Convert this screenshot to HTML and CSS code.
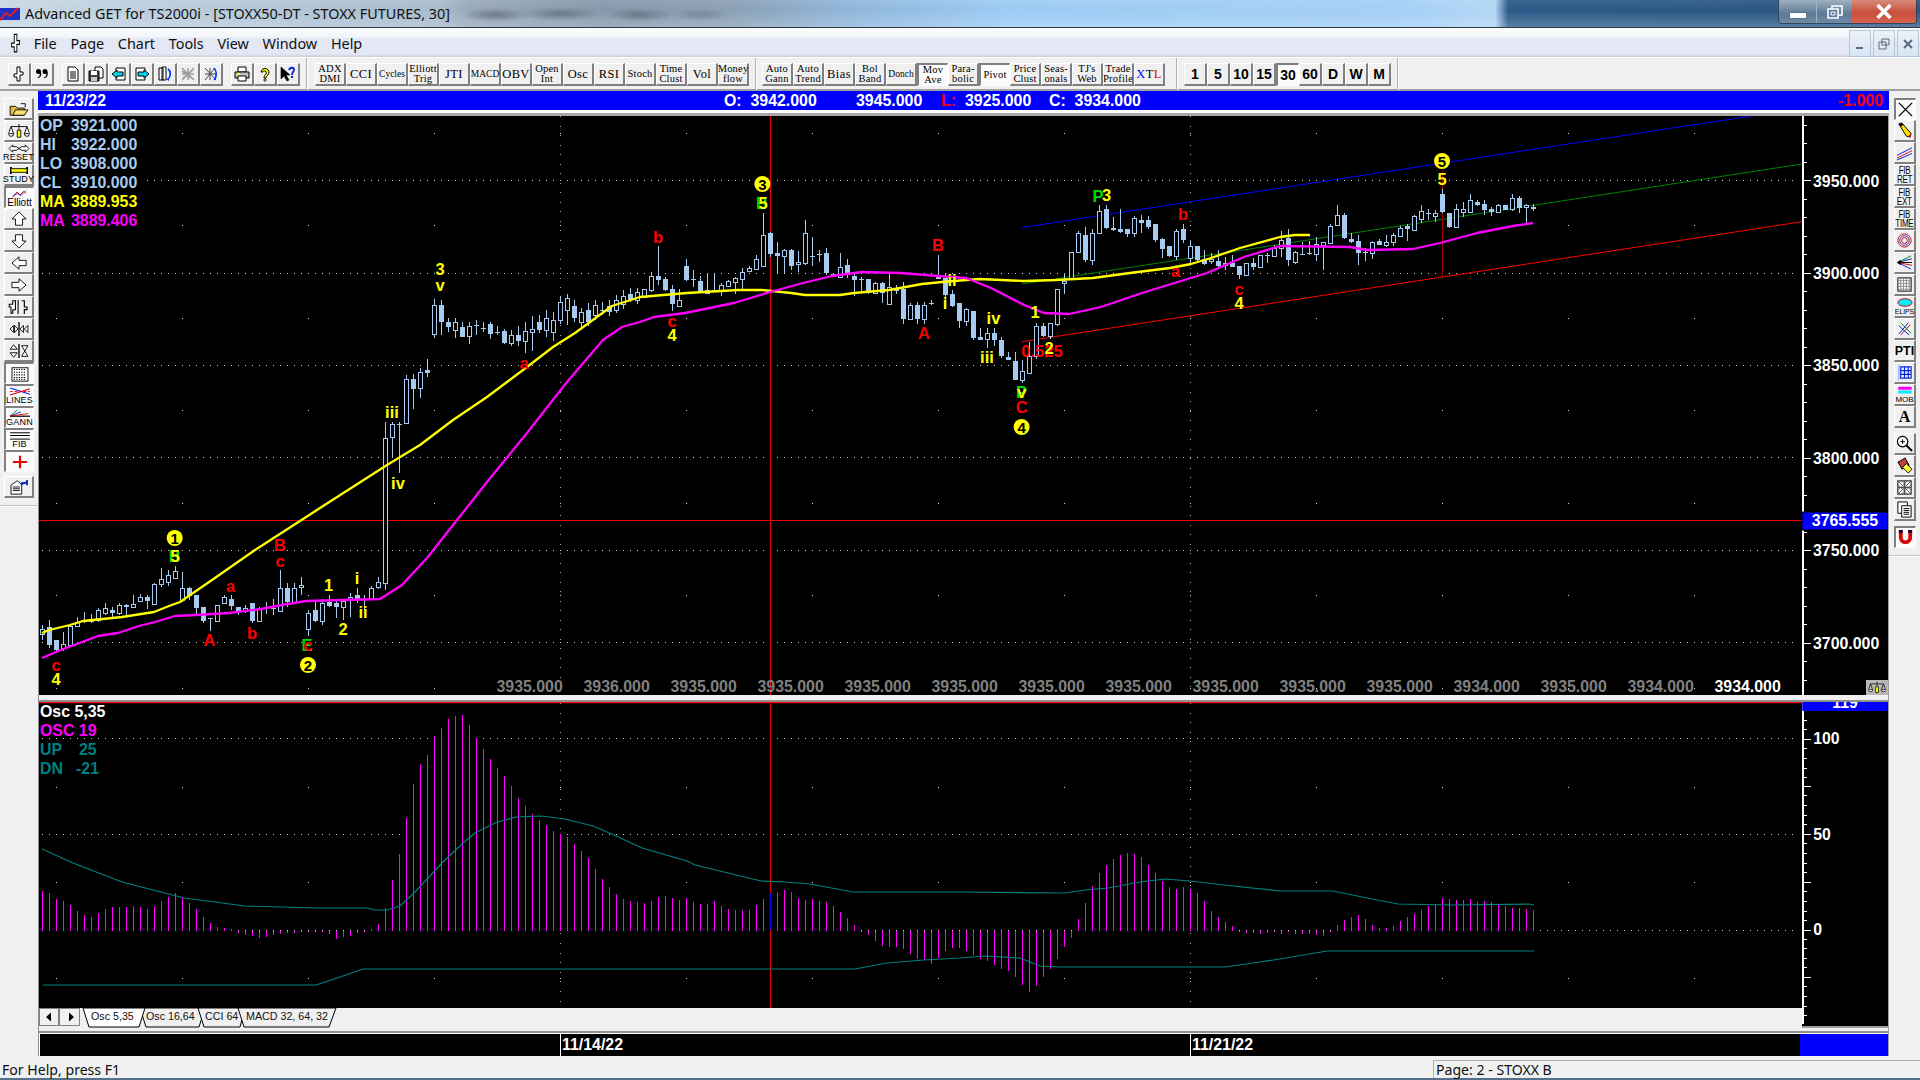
FILE: index.html
```html
<!DOCTYPE html>
<html lang="en">
<head>
<meta charset="utf-8">
<title>Advanced GET for TS2000i</title>
<link rel="stylesheet" href="styles.css">
</head>
<body>
<svg class="defs" width="0" height="0">
  <defs>
    <symbol id="i-dagger" viewBox="0 0 16 16" preserveAspectRatio="none"><path d="M6 1h3v5h3v3H9v6H6v-4H3V8h3z" fill="#fff" stroke="#000"/></symbol>
    <symbol id="i-scale" viewBox="0 0 24 18"><path d="M12 1v15M3 4h18M3 4l-3 8M3 4l3 8M21 4l-3 8M21 4l3 8" stroke="#000" fill="none"/><path d="M0 12h6a3 3 0 0 1-6 0zM18 12h6a3 3 0 0 1-6 0z" fill="#fff" stroke="#000"/><path d="M10 8h4v8h-4z" fill="#ff0" stroke="#000"/></symbol>
  </defs>
</svg>

<header class="titlebar">
  <svg class="appicon" viewBox="0 0 20 16"><path d="M0 2h20v12H0z" fill="#2030c0"/><path d="M0 14l6-7 4 3 8-8" stroke="#e02020" stroke-width="2" fill="none"/></svg>
  <span class="titletext">Advanced GET for TS2000i - [STOXX50-DT - STOXX FUTURES, 30]</span>
  <div class="wincontrols">
    <div class="wc wc-min"><i></i></div>
    <div class="wc wc-max"><svg viewBox="0 0 16 14" width="16" height="14"><path d="M5 1h10v9H5z" fill="none" stroke="#fff" stroke-width="1.6"/><path d="M1 4h10v9H1z" fill="#5d7f9f" stroke="#fff" stroke-width="1.6"/><path d="M4 7h4v3H4z" fill="none" stroke="#fff"/></svg></div>
    <div class="wc wc-close"><svg viewBox="0 0 18 14" width="20" height="15"><path d="M3 1l12 12M15 1L3 13" stroke="#fff" stroke-width="3.4"/></svg></div>
  </div>
</header>

<nav class="menubar">
  <svg class="menuicon" viewBox="0 0 14 20"><use href="#i-dagger" width="14" height="20"/></svg>
  <span>File</span><span>Page</span><span>Chart</span><span>Tools</span><span>View</span><span>Window</span><span>Help</span>
  <div class="mdicontrols">
    <div class="mdi"><svg width="12" height="12" viewBox="0 0 12 12"><path d="M2 9h7v2H2z" fill="#5b6b80"/></svg></div>
    <div class="mdi"><svg width="12" height="12" viewBox="0 0 12 12"><path d="M4 1h7v6H4zM1 4h7v7H1z" fill="#dfe7f2" stroke="#5b6b80"/></svg></div>
    <div class="mdi"><svg width="12" height="12" viewBox="0 0 12 12"><path d="M2 2l8 8M10 2l-8 8" stroke="#5b6b80" stroke-width="2"/></svg></div>
  </div>
</nav>

<div class="toolbar">
  <div class="tgroup">
    <button class="btn b23"><svg class="ic" viewBox="0 0 16 16"><use href="#i-dagger" width="16" height="16"/></svg></button>
    <button class="btn b23"><svg class="ic" viewBox="0 0 16 16"><circle cx="4.5" cy="5.5" r="2.5"/><circle cx="11" cy="5.5" r="2.5"/><path d="M5 6c2 3 0 5-2 6 3 0 5-2 4-6zM11.500 6c2 3 0 5-2 6 3 0 5-2 4-6z"/></svg></button>
  </div>
  <div class="tgroup g2">
    <button class="btn b23"><svg class="ic" viewBox="0 0 16 16"><path d="M3 1h7l3 3v11H3z" fill="#fff" stroke="#000"/><path d="M5 6h6M5 8h6M5 10h6M5 12h6" stroke="#000"/></svg></button>
    <button class="btn b23"><svg class="ic" viewBox="0 0 16 16"><path d="M7 1h6l2 2v9H7z" fill="#fff" stroke="#000"/><path d="M1 5h10v10H1z" fill="#404040" stroke="#000"/><path d="M3 5h6v4H3z" fill="#fff"/><path d="M3 11h6v4H3z" fill="#c8c8c8"/></svg></button>
    <button class="btn b23"><svg class="ic" viewBox="0 0 16 16"><path d="M5 2h9v12H5z" fill="#fff" stroke="#000"/><path d="M1 8l5-4v2h6v4H6v2z" fill="#00d8f0" stroke="#000"/></svg></button>
    <button class="btn b23"><svg class="ic" viewBox="0 0 16 16"><path d="M2 2h9v12H2z" fill="#fff" stroke="#000"/><path d="M15 8l-5-4v2H4v4h6v2z" fill="#00d8f0" stroke="#000"/></svg></button>
    <button class="btn b23"><svg class="ic" viewBox="0 0 16 16"><path d="M2 2h4v12H2zM5 1h4v13H5z" fill="#fff" stroke="#000"/><path d="M11 3c3 2 3 8 0 10" stroke="#0030ff" stroke-width="1.600" fill="none"/><path d="M9 13l3 2v-3z" fill="#0030ff"/></svg></button>
    <button class="btn b23"><svg class="ic" viewBox="0 0 16 16"><path d="M2 2l12 12M14 2L2 14M2 8h12M8 2v12M2 5l11 8M13 4L3 12" stroke="#a0a0a0" stroke-width="1.600"/></svg></button>
    <button class="btn b23"><svg class="ic" viewBox="0 0 16 16"><path d="M2 2l11 12M12 2L2 14M2 8h11M7 2v12" stroke="#404040"/><path d="M11 2c3 3 3 9 0 12" stroke="#0030ff" stroke-width="1.600" fill="none"/></svg></button>
  </div>
  <div class="tgroup g3">
    <button class="btn b23"><svg class="ic" viewBox="0 0 16 16"><path d="M4 1h8v5H4z" fill="#fff" stroke="#000"/><path d="M1 6h14v6H1z" fill="#c0c0c0" stroke="#000"/><path d="M4 10h8v5H4z" fill="#fff" stroke="#000"/><path d="M3 8h3" stroke="#ff0" stroke-width="2"/></svg></button>
    <button class="btn b23"><svg class="ic" viewBox="0 0 16 16"><path d="M4 6a4 4 0 1 1 7 3c-1 1-2 2-2 3H7c0-2 1-3 2-4 1-1 0-3-1-3S6 5 6 6z" fill="#ff0" stroke="#000"/><path d="M7 13h2v2H7z" fill="#ff0" stroke="#000" stroke-width=".7"/></svg></button>
    <button class="btn b23"><svg class="ic" viewBox="0 0 16 16"><path d="M1 1v12l3-3 3 5 2-1-3-5h4z" stroke="#000" stroke-width=".6"/><path d="M9 4c1-3 5-3 5 0 0 2-2 2-2 5" fill="none" stroke="#0020e0" stroke-width="1.800"/><path d="M11 10h2v2h-2z" fill="#0020e0"/></svg></button>
  </div>
  <div class="tsep"></div>
  <div class="tgroup g4">
    <button class="btn b31 st">ADX<br>DMI</button><button class="btn b31 st1">CCI</button><button class="btn b31 st sm">Cycles</button><button class="btn b31 st">Elliott<br>Trig</button><button class="btn b31 st1">JTI</button><button class="btn b31 st sm">MACD</button><button class="btn b31 st1">OBV</button><button class="btn b31 st">Open<br>Int</button><button class="btn b31 st1">Osc</button><button class="btn b31 st1">RSI</button><button class="btn b31 st">Stoch</button><button class="btn b31 st">Time<br>Clust</button><button class="btn b31 st1">Vol</button><button class="btn b31 st">Money<br>flow</button>
  </div>
  <div class="tsep s2"></div>
  <div class="tgroup g5">
    <button class="btn b31 st">Auto<br>Gann</button><button class="btn b31 st">Auto<br>Trend</button><button class="btn b31 st1">Bias</button><button class="btn b31 st">Bol<br>Band</button><button class="btn b31 st sm">Donch</button><button class="btn b31 st on">Mov<br>Ave</button><button class="btn b31 st">Para-<br>bolic</button><button class="btn b31 st on">Pivot</button><button class="btn b31 st">Price<br>Clust</button><button class="btn b31 st">Seas-<br>onals</button><button class="btn b31 st">TJ's<br>Web</button><button class="btn b31 st">Trade<br>Profile</button><button class="btn b31 st1"><b class="c-blue">X</b>T<b class="c-red">L</b></button>
  </div>
  <div class="tsep s3"></div>
  <div class="tgroup g6">
    <button class="btn b23 per">1</button><button class="btn b23 per">5</button><button class="btn b23 per">10</button><button class="btn b23 per">15</button><button class="btn b23 per on">30</button><button class="btn b23 per">60</button><button class="btn b23 per">D</button><button class="btn b23 per">W</button><button class="btn b23 per">M</button>
  </div>
  <div class="tsep s4"></div>
</div>

<div class="workspace">
  <aside class="tools left">
    <button class="tb"><svg viewBox="0 0 24 18"><path d="M2 6h6l2 2h8v8H2z" fill="#e0c040" stroke="#000"/><path d="M5 16l3-6h14l-4 6z" fill="#ffe070" stroke="#000"/><path d="M14 3h5v4" stroke="#000" fill="none"/></svg></button>
    <button class="tb"><svg viewBox="0 0 24 18"><use href="#i-scale"/></svg></button>
    <button class="tb lab"><svg viewBox="0 0 24 10"><path d="M1 5l4-4v2h4l3 2-3 2H5v2zM23 5l-4-4v2h-4l-3 2 3 2h4v2z" fill="#fff" stroke="#000"/></svg><span>RESET</span></button>
    <button class="tb lab"><svg viewBox="0 0 24 10"><path d="M3 1v8M21 1v8" stroke="#000" stroke-width="2"/><path d="M3 3h18v4H3z" fill="#ff0" stroke="#000"/></svg><span>STUDY</span></button>
    <button class="tb lab on"><svg viewBox="0 0 24 12"><path d="M2 11l6-7 4 4 5-5 3 3" stroke="#e00000" stroke-width="1.300" fill="none"/><path d="M3 9l6-3 4 3 7-7" stroke="#0020d0" fill="none"/></svg><span class="low">Elliott</span></button>
    <button class="tb"><svg viewBox="0 0 24 18"><path d="M12 1l8 8h-4v7H8V9H4z" fill="#fff" stroke="#000"/></svg></button>
    <button class="tb"><svg viewBox="0 0 24 18"><path d="M12 17l8-8h-4V2H8v7H4z" fill="#fff" stroke="#000"/></svg></button>
    <button class="tb"><svg viewBox="0 0 24 18"><path d="M4 9l8-7v4h8v6h-8v4z" fill="#fff" stroke="#000"/></svg></button>
    <button class="tb"><svg viewBox="0 0 24 18"><path d="M20 9l-8-7v4H4v6h8v4z" fill="#fff" stroke="#000"/></svg></button>
    <button class="tb"><svg viewBox="0 0 24 18"><path d="M1 6h4V2h3v10H5v4H3V9H1zM11 1v16" fill="#fff" stroke="#000" stroke-width="1.200"/><path d="M15 2h3v7h3v3h-3v5" fill="none" stroke="#000" stroke-width="1.300"/></svg></button>
    <button class="tb"><svg viewBox="0 0 24 18"><path d="M2 9l4-4v8zM7 5l4 4-4 4zM13 9l4-4v8zM22 5l-4 4 4 4z" fill="#fff" stroke="#000"/><path d="M12 1v16" stroke="#000" stroke-width="1.500"/></svg></button>
    <button class="tb"><svg viewBox="0 0 24 18"><path d="M6 2l4 5H2zM6 16l4-5H2z" fill="#fff" stroke="#000"/><path d="M12 1v16" stroke="#000" stroke-width="1.500"/><path d="M15 3h7l-3.500 6 3.500 6h-7l3.500-6z" fill="#fff" stroke="#000"/></svg></button>
    <button class="tb on"><svg viewBox="0 0 24 18"><rect x="3" y="2" width="18" height="15" fill="#fff" stroke="#000"/><path d="M5 4h14M5 7h14M5 10h14M5 13h14M5 15h14" stroke="#000" stroke-width="1.200" stroke-dasharray="1.400 1.400"/></svg></button>
    <button class="tb lab on"><svg viewBox="0 0 24 10"><path d="M1 1l22 7" stroke="#0020e0" stroke-width="1.200"/><path d="M1 9L23 2" stroke="#e00000" stroke-width="1.200"/><path d="M1 5h22" stroke="#e00000" stroke-dasharray="3 2"/></svg><span>LINES</span></button>
    <button class="tb lab on"><svg viewBox="0 0 24 10"><path d="M1 8L9 1" stroke="#008000"/><path d="M1 8l12-5" stroke="#0020e0"/><path d="M1 8h22" stroke="#000" stroke-width="1.400"/><path d="M1 8l20-3" stroke="#e00000"/></svg><span>GANN</span></button>
    <button class="tb lab on"><svg viewBox="0 0 24 10"><path d="M1 2h22M1 5h22M1 9h22" stroke="#000" stroke-width="1.100"/></svg><span>FIB</span></button>
    <button class="tb on"><svg viewBox="0 0 24 18"><path d="M12 2v14M4 9h16" stroke="#f00000" stroke-width="2.400"/></svg></button>
    <button class="tb gap"><svg viewBox="0 0 24 18"><path d="M3 7l7-5 5 4v11H3z" fill="#fff" stroke="#000"/><path d="M5 9h8M5 11h8M5 13h8" stroke="#000"/><path d="M14 4l6-1V1h2v6h-2V5l-6 2z" fill="#0020b0"/></svg></button>
    <div class="toolend"></div>
  </aside>

  <main class="main">
    <div class="infobar">
      <span class="d">11/23/22</span><span>O:&nbsp; 3942.000</span><span>3945.000</span><span class="c-lred">L:</span><span>3925.000</span><span>C:&nbsp; 3934.000</span><span class="chg">-1.000</span>
    </div>
    <div class="infoline"></div>

    <svg class="pane" viewBox="39 116 1849 579" width="1849" height="579">
      <g class="dots">
        <path d="M147 180.500H1794"/>
        <path d="M42 273H1794M42 365H1794M42 457.500H1794M42 550H1794M42 642.500H1794"/>
        <path class="v" d="M560.500 116V695M1190.500 116V695"/>
      </g>
      <g id="sparse-top" class="sparse"></g>
      <path class="hline" d="M39 520.500H1802"/>
      <path class="tl-blue" d="M1022 227.500L1751 116"/>
      <path class="tl-green" d="M1022 284L1802 164"/>
      <path class="tl-red" d="M1022 341.700L1802 221.700"/>
      <path class="dline" d="M1442.500 170V277"/>
      <path class="cursor" d="M770.500 116V695"/>
      <g id="candles"></g>
      <polyline class="ma-y" points="42,633 49,630 70,625 83,621 122,617 154,612 169,606 180,602 196,591 212,580 255,550 300,521 320,508 387,465 420,445 453,420 487,397 527,367 553,347 575,333 612,306 640,297 687,293 738,290 762,290 791,293 805,295 840,295 854,293 889,290 922,284 942,282 979,279 1024,281 1056,280 1093,278 1130,273 1170,268 1191,264 1211,258 1240,248 1280,237 1295,235 1310,235"/>
      <polyline class="ma-m" points="42,658 61,650 82,642 98,636 118,633 139,626 155,622 175,616 196,615 229,613 261,609 282,605 306,601 380,599 402,585 427,558 457,520 465,510 487,482 527,433 567,382 603,340 622,327 640,322 654,317 685,313 734,303 770,292 803,283 832,276 862,272 901,273 938,276 966,278 991,288 1024,305 1044,313 1069,314 1101,307 1142,293 1207,273 1244,257 1280,246 1350,247 1367,250 1413,249 1440,243 1477,233 1513,226 1533,223"/>

      <g class="lb">
        <circle class="ball" cx="174.700" cy="538" r="8"/><text class="k" x="174.700" y="538">1</text>
        <text class="g" x="174.700" y="556">B</text><text class="y" x="175" y="556">5</text>
        <text class="r" x="56" y="665">c</text><text class="y" x="56" y="679">4</text>
        <text class="r" x="209.400" y="640">A</text><text class="r" x="252" y="633">b</text><text class="r" x="230.600" y="586">a</text>
        <text class="r" x="280" y="545">B</text><text class="r" x="280" y="561">c</text>
        <text class="g" x="307" y="645">E</text><text class="r" x="308" y="645">c</text>
        <circle class="ball" cx="308" cy="665" r="8"/><text class="k" x="308" y="665">2</text>
        <text class="y" x="328.600" y="585">1</text><text class="y" x="343" y="629">2</text><text class="y" x="357" y="578">i</text><text class="y" x="363" y="612">ii</text>
        <text class="y" x="392" y="412">iii</text><text class="y" x="398" y="483">iv</text><text class="r" x="524" y="363">a</text>
        <text class="y" x="440" y="269">3</text><text class="y" x="440" y="285">v</text>
        <circle class="ball" cx="762.400" cy="184" r="8"/><text class="k" x="762.400" y="184">3</text>
        <text class="g" x="762" y="203">B</text><text class="y" x="763" y="203">5</text>
        <text class="r" x="658" y="237">b</text><text class="r" x="672" y="321">c</text><text class="y" x="672" y="335">4</text>
        <text class="r" x="938" y="245">B</text><text class="y" x="952" y="280">ii</text><text class="y" x="945" y="303">i</text><text class="r" x="924" y="333">A</text>
        <text class="y" x="993.500" y="318">iv</text><text class="y" x="987" y="357">iii</text><text class="y" x="1035" y="312">1</text>
        <text class="r" x="1042" y="351">0.525</text><text class="y" x="1049" y="348">2</text>
        <text class="g" x="1021.600" y="392">P</text><text class="y" x="1021.600" y="392">v</text><text class="r" x="1021.600" y="407">C</text>
        <circle class="ball" cx="1021.600" cy="427" r="8"/><text class="k" x="1021.600" y="427">4</text>
        <text class="g" x="1098" y="196">P</text><text class="y" x="1106.500" y="195">3</text>
        <text class="r" x="1183" y="214">b</text><text class="r" x="1175.500" y="271">a</text><text class="r" x="1239" y="289">c</text><text class="y" x="1239" y="303">4</text>
        <circle class="ball" cx="1442" cy="161" r="8"/><text class="k" x="1442" y="161">5</text>
        <text class="y" x="1442" y="179">5</text>
      </g>

      <g class="legend">
        <text class="lb-blue" x="40" y="125">OP</text><text class="lb-blue" x="71" y="125">3921.000</text>
        <text class="lb-blue" x="40" y="144">HI</text><text class="lb-blue" x="71" y="144">3922.000</text>
        <text class="lb-blue" x="40" y="163">LO</text><text class="lb-blue" x="71" y="163">3908.000</text>
        <text class="lb-blue" x="40" y="182">CL</text><text class="lb-blue" x="71" y="182">3910.000</text>
        <text class="lb-yel" x="40" y="201">MA</text><text class="lb-yel" x="71" y="201">3889.953</text>
        <text class="lb-mag" x="40" y="220">MA</text><text class="lb-mag" x="71" y="220">3889.406</text>
      </g>

      <g class="legend vals">
        <text x="496.500" y="686">3935.000</text><text x="583.500" y="686">3936.000</text><text x="670.500" y="686">3935.000</text><text x="757.500" y="686">3935.000</text><text x="844.500" y="686">3935.000</text><text x="931.500" y="686">3935.000</text><text x="1018.500" y="686">3935.000</text><text x="1105.500" y="686">3935.000</text><text x="1192.500" y="686">3935.000</text><text x="1279.500" y="686">3935.000</text><text x="1366.500" y="686">3935.000</text><text x="1453.500" y="686">3934.000</text><text x="1540.500" y="686">3935.000</text><text x="1627.500" y="686">3934.000</text>
        <text class="w" x="1714.500" y="686">3934.000</text>
      </g>

      <path class="axis" d="M1802.500 116V695"/>
      <g id="ticks-top" class="ticks"></g>
      <g class="legend axl">
        <text x="1813" y="181">3950.000</text><text x="1813" y="273">3900.000</text><text x="1813" y="365">3850.000</text><text x="1813" y="458">3800.000</text><text x="1813" y="550">3750.000</text><text x="1813" y="643">3700.000</text>
      </g>
      <rect class="pricebox" x="1802" y="512" width="86" height="18"/>
      <text class="pricetext" x="1845" y="520.500">3765.555</text>
      <g class="scalebtn">
        <rect x="1866" y="680" width="22" height="15"/>
        <svg x="1868" y="681" width="18" height="13" viewBox="0 0 24 18"><use href="#i-scale"/></svg>
      </g>
    </svg>

    <div class="panesep"></div>

    <div class="lower">
      <div class="lowerleft">
        <svg class="pane" viewBox="39 702 1763 306" width="1763" height="306">
          <path class="redtop" d="M39 702.500H1802"/>
          <g class="dots">
            <path d="M42 738.500H1794M42 834.500H1794M42 930.500H1794"/>
            <path class="v v2" d="M560.500 703V1008M1190.500 703V1008"/>
          </g>
          <g id="sparse-low" class="sparse"></g>
          <g id="hist"></g>
          <path class="cursor" d="M770.500 703V1008"/>
          <path class="curbar" d="M770.500 893V930"/>
          <polyline class="teal" points="42,849 73,863 122,882 184,898 245,906 320,908 367,908 375,910 387,910 400,906 414,893 442,863 463,843 475,833 495,823 516,817 542,816 565,819 593,826 614,835 642,848 687,861 695,865 728,873 761,881 785,882 810,884 853,892 960,892 1065,893 1085,890 1108,888 1140,882 1165,879 1190,881 1224,885 1280,891 1333,891 1362,897 1398,904 1451,905 1529,904 1534,905"/>
          <polyline class="teal" points="43,985 316,985 340,977 363,969 855,969 887,963 924,960 960,958 985,956 1020,958 1040,966 1060,967 1225,967 1260,962 1280,959 1327,951 1534,951"/>
          <g class="legend">
            <text class="w" x="40" y="711">Osc 5,35</text>
            <text class="lb-mag" x="40" y="730">OSC 19</text>
            <text class="lb-teal" x="40" y="749">UP</text><text class="lb-teal" x="79" y="749">25</text>
            <text class="lb-teal" x="40" y="768">DN</text><text class="lb-teal" x="76" y="768">-21</text>
          </g>
        </svg>
        <svg class="tabs" viewBox="39 1008 1763 20" width="1763" height="20">
          <rect class="scbtn" x="39.500" y="1008.500" width="19" height="17"/>
          <rect class="scbtn" x="59.500" y="1008.500" width="20" height="17"/>
          <path class="scarrow" d="M51 1012.500v9l-5-4.500zM69 1012.500v9l5-4.500z"/>
          <polygon class="tab" points="140,1008 146,1027 199,1027 205,1008"/>
          <polygon class="tab" points="198,1008 204,1027 240,1027 245,1008"/>
          <polygon class="tab" points="238,1008 244,1027 329,1027 336,1008"/>
          <polygon class="tab active" points="83,1008 89,1027 139,1027 145,1008"/>
          <text class="tabt" x="91" y="1016">Osc 5,35</text>
          <text class="tabt" x="146" y="1016">Osc 16,64</text>
          <text class="tabt" x="205" y="1016">CCI 64</text>
          <text class="tabt" x="246" y="1016">MACD 32, 64, 32</text>
        </svg>
      </div>
      <svg class="paneaxis" viewBox="1802 702 86 326" width="86" height="326">
        <path class="axis" d="M1802.500 702V1026"/>
        <g id="ticks-low" class="ticks"></g>
        <rect class="topbox" x="1802" y="702" width="86" height="9"/>
        <text class="toptext" x="1845" y="703">119</text>
        <g class="legend axl">
          <text x="1813" y="739">100</text><text x="1813" y="835">50</text><text x="1813" y="931">0</text>
        </g>
      </svg>
    </div>

    <div class="lowersep"></div>

    <div class="dates">
      <div class="dcell d0"></div>
      <div class="dcell d1">11/14/22</div>
      <div class="dcell d1 grow">11/21/22</div>
      <div class="dcell dblue"></div>
    </div>
  </main>

  <aside class="tools right">
    <button class="tb on"><svg viewBox="0 0 18 18"><path d="M2 2l14 14M16 2L2 16" stroke="#000" stroke-width="1.400"/></svg></button>
    <button class="tb"><svg viewBox="0 0 18 18"><path d="M3 2l3-1 10 11-1 4-4-1z" fill="#ffd800" stroke="#000"/><path d="M3 2l3-1 2 2-3 2z"/><path d="M13 15l2-2 1 3z" fill="#e00000"/></svg></button>
    <button class="tb"><svg viewBox="0 0 18 18"><path d="M1 12L17 4" stroke="#0020e0"/><path d="M1 15L17 7" stroke="#e00000"/><path d="M1 17l16-7" stroke="#0020e0"/></svg></button>
    <button class="tb tx"><span class="nar">FIB<br>RET</span></button>
    <button class="tb tx"><span class="nar">FIB<br>EXT</span></button>
    <button class="tb tx"><span class="nar">FIB<br>TIME</span></button>
    <button class="tb"><svg viewBox="0 0 18 18"><circle cx="9" cy="9" r="7" fill="none" stroke="#e00000"/><circle cx="9" cy="9" r="5" fill="none" stroke="#0020e0"/><circle cx="9" cy="9" r="3" fill="none" stroke="#e00000"/></svg></button>
    <button class="tb"><svg viewBox="0 0 18 18"><path d="M2 9l14-7" stroke="#008000"/><path d="M2 9l15-4" stroke="#0020e0"/><path d="M2 9h15" stroke="#000"/><path d="M2 9l15 3" stroke="#e00000"/><path d="M2 9l14 7" stroke="#0020e0"/><path d="M1 9l4-3v6z" fill="#000"/></svg></button>
    <button class="tb"><svg viewBox="0 0 18 18"><rect x="2" y="2" width="14" height="14" fill="#fff" stroke="#000"/><path d="M2 5h14M2 8h14M2 11h14M2 14h14M5 2v14M8 2v14M11 2v14M14 2v14" stroke="#808080" stroke-width=".9"/></svg></button>
    <button class="tb lab"><svg viewBox="0 0 22 12"><ellipse cx="11" cy="6" rx="9.500" ry="5" fill="#00f0ff" stroke="#e00000" stroke-width="1.300"/></svg><span class="tiny">ELIPS</span></button>
    <button class="tb"><svg viewBox="0 0 18 18"><path d="M3 15L13 3" stroke="#0020e0"/><path d="M5 16L15 5" stroke="#e00000"/><path d="M3 6l11 10" stroke="#0020e0"/><path d="M5 3l11 11" stroke="#008000"/></svg></button>
    <button class="tb pti">PTI</button>
    <button class="tb"><svg viewBox="0 0 18 18"><path d="M3 1v16" stroke="#a0b8ff" stroke-width="2"/><path d="M5 3h11v12H5zM5 7h11M5 11h11M9 3v12M13 3v12" fill="none" stroke="#0020e0" stroke-width="1.200"/></svg></button>
    <button class="tb lab"><svg viewBox="0 0 22 12"><path d="M2 1h18v4H2z" fill="#ff00ff"/><path d="M2 6h18v4H2z" fill="#00f0ff"/></svg><span class="tiny2">MOB</span></button>
    <button class="tb aa">A</button>
    <button class="tb gap"><svg viewBox="0 0 18 18"><circle cx="7" cy="7" r="5.500" fill="#fff" stroke="#000" stroke-width="1.300"/><path d="M4.500 7h5M7 4.500v5" stroke="#000"/><path d="M11 11l6 6" stroke="#000" stroke-width="2.200"/></svg></button>
    <button class="tb"><svg viewBox="0 0 18 18"><path d="M2 7l6-6 6 6-6 6z" transform="rotate(15 8 7)" fill="#c04040" stroke="#000"/><path d="M7 11l4-4 6 6-4 4z" fill="#ffff40" stroke="#000"/></svg></button>
    <button class="tb"><svg viewBox="0 0 18 18"><rect x="2" y="2" width="14" height="14" fill="#fff" stroke="#000"/><path d="M2 2l14 14M16 2L2 16M2 9h14M9 2v14M2 6l10 10M6 2l10 10M16 6L6 16M12 2L2 12" stroke="#404040" stroke-width=".9"/></svg></button>
    <button class="tb"><svg viewBox="0 0 18 18"><path d="M2 1h10v12H2z" fill="#fff" stroke="#000"/><path d="M6 5h10v12H6z" fill="#fff" stroke="#000"/><path d="M8 8h6M8 10h6M8 12h6M8 14h6" stroke="#000"/></svg></button>
    <button class="tb on gap"><svg viewBox="0 0 18 18"><path d="M2 1h4v8a3 3 0 0 0 6 0V1h4v8a7 7 0 0 1-14 0z" fill="#d80000"/><path d="M2 1h4v3H2zM12 1h4v3h-4z" fill="#000040"/></svg></button>
    <div class="toolend end2"></div>
  </aside>
</div>

<footer class="statusbar">
  <span class="st-left">For Help, press F1</span>
  <span class="st-right">Page: 2 - STOXX B</span>
</footer>
<script src="app.js"></script>
</body>
</html>
```

FILE: styles.css
```css
* { box-sizing: border-box; }
html, body { margin: 0; padding: 0; }
body {
  width: 1920px; height: 1080px; overflow: hidden;
  display: flex; flex-direction: column;
  background: #f0f0f0;
  font-family: "Liberation Sans", Arial, sans-serif;
  color: #000;
}
.defs { position: absolute; }

/* title bar */
.titlebar {
  height: 28px; flex: none; display: flex; align-items: center;
  border-bottom: 1px solid #2c3a48;
  background:
    radial-gradient(ellipse 34px 7px at 495px 15px, rgba(40,50,60,.4), transparent),
    radial-gradient(ellipse 40px 7px at 560px 14px, rgba(40,50,60,.35), transparent),
    radial-gradient(ellipse 34px 7px at 640px 15px, rgba(40,50,60,.35), transparent),
    radial-gradient(ellipse 30px 6px at 700px 15px, rgba(50,60,70,.25), transparent),
    linear-gradient(180deg, rgba(255,255,255,.08), rgba(255,255,255,0) 40%, rgba(230,240,250,.25) 100%),
    linear-gradient(90deg, #c8d8e4 0, #b4c8d8 250px, #a8bccc 440px, #98a9ba 470px, #8698ab 600px, #8a9fb4 730px, #8fb4d8 840px, #9ccaf4 1000px, #a4cff6 1400px, #b2d6f4 1495px, #2a5a88 1508px, #2a5682 1780px, #2a5682 1920px);
}
.appicon { width: 20px; height: 16px; flex: none; margin-right: 5px; }
.titletext { font: 14.400px "Noto Sans", sans-serif; color: #111; white-space: nowrap; }
.wincontrols { margin-left: auto; display: flex; height: 24px; align-self: flex-start; margin-right: 3px; border: 1px solid #34465a; border-top: 0; border-radius: 0 0 4px 4px; overflow: hidden; }
.wc { display: flex; align-items: center; justify-content: center; }
.wc-min { width: 38px; background: linear-gradient(#9fb0c0, #5d7a96 60%, #6f8aa4); border-right: 1px solid #9db1c4; }
.wc-min i { display: block; width: 16px; height: 5px; background: #fff; margin-top: 8px; box-shadow: 0 0 1px #234; }
.wc-max { width: 35px; background: linear-gradient(#9fb0c0, #5d7a96 60%, #6f8aa4); }
.wc-close { width: 64px; background: linear-gradient(#d88a78, #c8503c 55%, #d8604c); }

/* menu */
.menubar {
  height: 29px; flex: none; display: flex; align-items: center; gap: 13.700px;
  padding: 1px 0 0 9px;
  background: linear-gradient(180deg, #fdfefe 0, #f2f5fa 30%, #e4e8f4 38%, #e4e8f4 90%, #c8ccd8 100%);
  font: 14.400px "Noto Sans", sans-serif;
  color: #111;
}
.menuicon { width: 14px; height: 20px; margin-right: -3px; }
.mdicontrols { margin-left: auto; display: flex; gap: 2px; height: 27px; align-self: flex-start; margin-top: 1px; margin-right: 1px; }
.mdi { width: 22px; display: flex; align-items: center; justify-content: center; background: linear-gradient(#edf2f9, #d8e4f2); border: 1px solid #b4c6da; }

/* toolbar */
.toolbar {
  height: 34px; flex: none; display: flex; align-items: flex-start; padding: 5px 0 0 8px;
  background: #f0f0f0; border-top: 1px solid #fff; border-bottom: 2px solid #a0a0a0;
}
.tgroup { display: flex; }
.g2 { margin-left: 8px; }
.g3 { margin-left: 8px; }
.tsep { height: 32px; background: #b0b0b0; margin: -5px 7px 0 6px; border-right: 1px solid #fff; width: 2px; }
.s2 { margin-left: 6px; margin-right: 5px; }
.s3 { margin-left: 11px; margin-right: 6px; }
.s4 { margin-left: 6px; }
.btn {
  height: 23px; padding: 0; margin: 0; display: flex; align-items: center; justify-content: center;
  background: #f0f0f0; color: #000;
  border: 1px solid #fff; border-right: 2px solid #808080; border-bottom: 2px solid #808080;
  text-align: center;
}
.b23 { width: 23px; }
.b31 { width: 31px; }
.ic { width: 16px; height: 16px; display: block; }
.st { font: 10.500px/10px "Liberation Serif", serif; letter-spacing: .2px; }
.st.sm { font-size: 9.500px; letter-spacing: 0; }
.st1 { font: 12.500px/12px "Liberation Serif", serif; letter-spacing: .4px; }
.per { font: bold 14px "Liberation Sans", sans-serif; }
.btn.on {
  background: #fbfbfb; border-color: #808080 #fff #fff #808080;
  border-width: 2px 1px 1px 2px;
}
.c-blue { color: #0000ff; font-weight: normal; }
.c-red { color: #e00000; font-weight: normal; }

/* workspace */
.workspace { flex: none; height: 965px; display: flex; }
.tools { flex: none; display: flex; flex-direction: column; padding-top: 7px; background: #f0f0f0; }
.tools.left { width: 38px; padding-left: 4px; }
.tools.right { width: 31px; padding-left: 5px; }
.tb {
  height: 22px; width: 30px; padding: 0; margin: 0; flex: none; display: flex; flex-direction: column; align-items: center; justify-content: center;
  background: #f0f0f0; color: #000;
  border: 1px solid #fff; border-right: 2px solid #808080; border-bottom: 2px solid #808080;
}
.tb svg { width: 22px; height: 16px; flex: none; }
.tools.right .tb { width: 22px; }
.tools.right .tb svg { width: 17px; height: 17px; }
.tb.lab svg { height: 9px; }
.tools.right .tb.lab svg { width: 18px; height: 9px; }
.tb span { font: 9px/9px "Liberation Sans", sans-serif; letter-spacing: .2px; }
.tb span.low { font-size: 10px; letter-spacing: 0; }
.tb span.tiny { font-size: 7px; letter-spacing: -.1px; }
.tb span.tiny2 { font-size: 8px; letter-spacing: -.1px; }
.tb span.nar { display: block; font-size: 10px; line-height: 9px; letter-spacing: -.3px; transform: scaleX(.8); text-align: center; }
.tb.on { background: #fbfbfb; border-color: #808080 #fff #fff #808080; border-width: 2px 1px 1px 2px; }
.pti { font: bold 12.500px "Liberation Sans", sans-serif; }
.aa { font: bold 16px "Liberation Serif", serif; }
.gap { margin-top: 5px; }
.tools.left .gap { margin-top: 4px; }
.toolend { height: 2px; background: #c0c0c0; margin: 7px 0 0 -4px; width: 38px; border-bottom: 1px solid #fff; flex: none; }
.end2 { margin-left: -5px; width: 31px; }

/* main */
.main { width: 1851px; flex: none; display: flex; flex-direction: column; border-left: 1px solid #909090; border-right: 1px solid #a0a0a0; }
.infobar {
  height: 19px; flex: none; margin: 0 -1px; background: #0000ff; color: #fff;
  display: grid; grid-template-columns: 686px 132px 85px 24px 84px 1fr auto; align-items: center;
  font: bold 15.900px "Liberation Sans", sans-serif; white-space: nowrap;
}
.infobar .d { padding-left: 7px; }
.c-lred, .chg { color: #ff0000; }
.chg { padding-right: 6px; }
.infoline { height: 6px; flex: none; background: #fff; border-bottom: 3px solid #a8a8a8; margin: 0 -1px; }
.pane { display: block; background: #000; flex: none; }
.panesep { height: 7px; flex: none; background: #f0f0f0; border-bottom: 2px solid #909090; }
.lower { display: flex; flex: none; height: 326px; }
.lowerleft { width: 1763px; flex: none; }
.paneaxis { display: block; background: #000; border-bottom: 2px solid #a0a0a0; flex: none; }
.tabs { display: block; background: #f0f0f0; }
.lowersep { height: 5px; flex: none; background: #f0f0f0; border-bottom: 2px solid #909090; }
.dates { height: 23px; flex: none; display: flex; background: #000; color: #fff; font: bold 15.900px/22px "Liberation Sans", sans-serif; border-top: 1px solid #fff; }
.dcell { flex: none; }
.d0 { width: 521px; border-left: 1px solid #fff; }
.d1 { width: 630px; border-left: 1px solid #fff; padding-left: 1px; }
.d1.grow { width: 610px; }
.dblue { flex: 1; background: #0000ff; }

/* chart svg */
.dots path { stroke: #d0d0d0; stroke-width: 1; stroke-dasharray: 1 6; fill: none; shape-rendering: crispEdges; }
.dots path.v { stroke: #a8a8a8; stroke-dasharray: 1 8.500; }
.dots path.v2 { stroke-dasharray: 1 8.600; }
.sparse rect { fill: #d8d8d8; }
.hline { stroke: #f00000; stroke-width: 1; shape-rendering: crispEdges; }
.redtop { stroke: #f00000; stroke-width: 1.500; }
.tl-blue { stroke: #0000ff; stroke-width: 1; fill: none; }
.tl-green { stroke: #008000; stroke-width: 1; fill: none; }
.tl-red { stroke: #ff0000; stroke-width: 1; fill: none; }
.dline { stroke: #a00000; stroke-width: 1; shape-rendering: crispEdges; }
.cursor { stroke: #e00000; stroke-width: 1.300; }
.curbar { stroke: #0000ff; stroke-width: 1.300; }
.ma-y { fill: none; stroke: #ffff00; stroke-width: 2.300; stroke-linejoin: round; }
.ma-m { fill: none; stroke: #ff00ff; stroke-width: 2.300; stroke-linejoin: round; }
.teal { fill: none; stroke: #008080; stroke-width: 1.200; }
.c-wick { stroke: #a6caf0; stroke-width: 1; shape-rendering: crispEdges; }
.c-hollow { fill: #000; stroke: #a6caf0; stroke-width: 1; shape-rendering: crispEdges; }
.c-fill { fill: #a6caf0; shape-rendering: crispEdges; }
.bar { stroke: #ff00ff; stroke-width: 1; shape-rendering: crispEdges; }
.lb text { font: bold 16.500px "Liberation Sans", sans-serif; text-anchor: middle; dominant-baseline: central; }
.lb .r { fill: #ff0000; }
.lb .y { fill: #ffff00; }
.lb .g { fill: #00d800; }
.lb .k { fill: #000; font-size: 15px; }
.ball { fill: #ffff00; }
.legend text { font: bold 15.900px "Liberation Sans", sans-serif; dominant-baseline: central; }
.legend .lb-blue { fill: #a6caf0; }
.legend .lb-yel { fill: #ffff00; }
.legend .lb-mag { fill: #ff00ff; }
.legend .lb-teal { fill: #008080; }
.legend .w { fill: #fff; }
.vals text { fill: #808080; }
.vals text.w { fill: #fff; }
.axl text { fill: #fff; }
.axis { stroke: #fff; stroke-width: 2; shape-rendering: crispEdges; }
.ticks path { stroke: #fff; stroke-width: 1; shape-rendering: crispEdges; }
.pricebox { fill: #0000ff; stroke: #000; stroke-width: 1; }
.pricetext { font: bold 15.900px "Liberation Sans", sans-serif; fill: #fff; text-anchor: middle; dominant-baseline: central; }
.scalebtn rect { fill: #b8b8b8; }
.topbox { fill: #0000ff; }
.toptext { font: bold 15.900px "Liberation Sans", sans-serif; fill: #fff; text-anchor: middle; dominant-baseline: central; }
.scbtn { fill: #f0f0f0; stroke: #808080; }
.scarrow { fill: #000; }
.tab { fill: #f0f0f0; stroke: #000; stroke-width: 1; }
.tab.active { fill: #fff; }
.tabt { font: 10.700px "Liberation Sans", sans-serif; fill: #111; dominant-baseline: central; }

/* status */
.statusbar {
  height: 24px; flex: none; display: flex; align-items: flex-start;
  border-bottom: 2px solid #55708c; background: #f0f0f0;
  font: 14.100px/20px "Noto Sans", sans-serif; color: #111;
}
.st-left { padding: 4px 0 0 2px; }
.st-right { margin-left: auto; width: 487px; height: 18px; margin-top: 4px; border: 1px solid #b0b0b0; border-bottom: 0; border-right: 0; padding-left: 2px; line-height: 18px; }
```

FILE: app.js
```js
(function () {
  var NS = 'http://www.w3.org/2000/svg';
  function el(parent, tag, cls, attrs) {
    var n = document.createElementNS(NS, tag);
    if (cls) n.setAttribute('class', cls);
    for (var k in attrs) n.setAttribute(k, attrs[k]);
    parent.appendChild(n);
    return n;
  }
  function cx(i) { return Math.round(42.4 + 7 * i); }

  // top, bottom, high, low, kind (0 hollow, 1 filled, 2 plus)
  var C = [
    [629,634,625,640,0],[627,645,620,648,1],[640,650,640,653,1],[644,648,632,651,0],[626,645,625,646,0],[622,626,617,627,0],[620,622,612,623,1],[620,622,614,623,1],[610,620,608,622,0],[608,613,603,615,0],
    [610,613,607,617,1],[605,613,603,615,0],[605,607,604,617,1],[604,607,595,607,0],[597,601,594,602,0],[597,601,595,609,1],[584,604,583,605,0],[579,584,568,587,0],[575,582,570,586,0],[571,578,566,579,0],
    [588,600,572,602,0],[588,596,587,600,1],[595,608,595,615,1],[607,621,607,623,1],[618,618,618,631,2],[605,621,605,622,0],[597,603,595,604,0],[599,606,595,610,1],[607,611,607,615,1],[608,611,605,613,0],
    [603,621,603,623,1],[608,621,607,622,0],[607,607,602,614,2],[608,608,599,615,2],[588,611,570,612,0],[588,602,583,607,1],[588,602,583,603,0],[585,587,577,595,0],[613,629,610,636,0],[610,621,602,622,1],
    [603,621,599,625,0],[602,606,595,607,1],[603,607,601,618,1],[601,607,600,620,0],[597,599,593,617,0],[595,600,588,603,1],[599,599,595,610,2],[588,599,586,600,0],[582,587,577,589,0],[438,583,422,590,0],
    [424,437,422,458,0],[424,424,422,473,2],[379,423,375,424,0],[379,389,374,409,1],[372,388,368,398,0],[370,373,359,377,1],[305,334,299,338,0],[305,322,300,335,1],[322,327,318,332,1],[322,330,318,338,0],
    [327,337,322,337,1],[326,336,322,344,0],[325,325,320,335,2],[328,328,322,332,2],[324,334,322,339,1],[332,332,326,335,2],[331,343,329,344,1],[335,343,330,346,0],[335,341,326,346,1],[331,341,322,353,0],
    [329,332,316,351,0],[322,330,315,333,1],[318,330,310,337,0],[320,332,312,341,0],[302,320,296,324,0],[298,310,294,325,0],[306,318,300,322,1],[312,322,308,328,0],[310,322,303,326,1],[305,315,300,320,0],
    [310,310,302,315,2],[306,312,300,316,1],[300,310,295,313,0],[296,304,290,309,0],[294,300,288,302,1],[292,300,288,304,0],[289,297,289,297,0],[276,290,272,292,0],[276,280,246,285,1],[279,290,277,291,1],
    [289,304,285,311,1],[300,306,289,307,0],[266,280,259,281,1],[279,279,270,287,2],[281,293,276,293,1],[290,293,274,294,0],[290,290,274,292,2],[285,290,283,296,0],[281,286,280,287,0],[278,282,277,294,0],
    [272,279,268,290,0],[268,271,266,272,0],[259,269,255,270,0],[235,266,213,267,0],[233,254,232,257,1],[253,256,242,273,1],[250,256,249,273,0],[250,266,249,270,1],[262,264,251,272,0],[233,263,220,265,0],
    [256,256,237,266,2],[254,254,250,262,2],[253,273,248,275,1],[274,277,273,277,1],[267,277,253,278,0],[265,275,259,278,1],[276,280,272,296,1],[279,279,277,293,2],[279,293,279,294,1],[283,293,282,294,0],
    [283,293,282,303,1],[287,304,272,305,0],[289,291,285,294,1],[289,319,282,324,1],[305,319,303,320,0],[305,319,302,324,1],[305,319,302,324,0],[303,303,300,305,2],[276,279,255,279,1],[278,295,273,300,1],
    [294,306,290,307,1],[303,321,303,328,1],[309,321,308,326,0],[311,338,311,340,1],[337,340,328,340,1],[333,339,328,348,0],[333,340,328,346,1],[340,356,337,358,1],[357,360,352,360,1],[361,380,352,380,1],
    [371,380,360,383,0],[356,373,342,373,0],[326,356,323,359,0],[326,336,323,337,1],[323,336,323,339,0],[289,324,289,326,0],[281,283,273,294,0],[252,278,252,280,0],[233,252,231,253,0],[235,260,227,262,1],
    [233,260,229,265,0],[211,233,205,234,0],[209,228,205,229,1],[228,230,217,231,1],[229,232,209,233,1],[229,234,229,237,1],[218,233,216,237,0],[220,223,215,233,1],[220,227,216,229,1],[224,240,224,242,1],
    [239,249,238,258,1],[246,256,246,257,1],[231,256,229,260,0],[229,240,224,243,1],[246,258,241,263,0],[246,260,246,262,1],[259,264,250,265,1],[259,261,253,264,0],[261,266,250,267,1],[263,265,257,270,0],
    [263,267,255,267,1],[266,275,266,279,1],[263,275,263,276,0],[263,267,258,270,1],[255,267,255,267,0],[255,255,253,263,2],[248,256,245,257,0],[240,248,231,257,0],[238,260,229,266,1],[252,262,251,264,0],
    [254,254,242,255,2],[253,253,241,255,2],[244,254,237,261,0],[242,245,242,270,0],[226,243,224,244,0],[215,225,205,226,0],[215,238,213,239,1],[239,242,233,243,1],[241,253,235,265,1],[252,252,248,261,2],
    [242,253,241,259,0],[241,245,239,245,1],[242,245,235,247,0],[235,242,233,246,0],[228,236,226,237,0],[226,229,224,241,1],[216,230,215,231,0],[211,219,205,223,0],[213,213,209,220,2],[213,216,210,222,0],
    [194,212,189,213,1],[213,227,213,228,1],[209,227,204,228,0],[209,212,202,217,0],[200,212,194,213,0],[202,205,200,206,1],[204,210,200,215,1],[209,212,207,216,1],[205,212,204,213,0],[205,210,205,210,1],
    [198,209,194,211,0],[198,208,196,213,1],[205,207,204,223,0],[207,209,204,211,1]
  ];

  var g = document.getElementById('candles');
  C.forEach(function (c, i) {
    var x = cx(i) + 0.5;
    el(g, 'line', 'c-wick', { x1: x, x2: x, y1: c[2], y2: c[3] });
    if (c[4] === 0) {
      el(g, 'rect', 'c-hollow', { x: x - 2, y: c[0] + 0.5, width: 4, height: Math.max(c[1] - c[0], 1) });
    } else if (c[4] === 1) {
      el(g, 'rect', 'c-fill', { x: x - 2.5, y: c[0], width: 5, height: Math.max(c[1] - c[0], 1) });
    } else {
      el(g, 'line', 'c-wick', { x1: x - 2.5, x2: x + 2.5, y1: c[0] + 0.5, y2: c[0] + 0.5 });
    }
  });

  var H = [
    40,38,32,30,26,20,16,14,18,22,24,24,24,25,24,22,25,30,34,38,
    34,28,22,14,8,4,3,2,-2,-4,-5,-7,-6,-4,-3,-2,-2,-1,-1,-1,
    -1.7,-3.3,-8.3,-6.3,-5,-2.3,-1.7,1.3,6.7,23,51,77,113,147,167,176,195,203,212,215,
    216,206,193,182,172,163,155,145,133,125,117,111,106,100,97,94,87,80,73,62,
    52,44,37,32,30,29,28,30,34,35,33,31,33,29,27,27,30,25,22,21,
    21,21,26,32,37,39,41,39,33,31,32,30,29,25,19,13,6,-1,-4.3,-10,
    -15,-16,-16,-18,-23,-28,-29,-33,-27,-20,-17,-17,-20,-24,-28,-30,-34,-38,-40,-46,
    -54,-61,-55,-46,-38,-28,-16,-7,12,28,45,58,66,72,76,78,77,74,66,58,
    50,44,42,44,42,38,30,20,14,9,5,-1,-2,-2,-3,-2,-1,-3,-1,-3,
    -3,-3,-4,-5,-1,5.7,10.7,14,15.7,11.3,5.7,2.3,2.3,4.7,9.7,13.3,16.7,20.7,24.7,26.7,
    32.3,31.7,30.7,30.7,31.3,28.7,29.7,28.3,25.7,24.7,22.7,22.7,21.3,20.7
  ];
  var h = document.getElementById('hist');
  H.forEach(function (v, i) {
    var x = cx(i) + 0.5;
    el(h, 'line', 'bar', { x1: x, x2: x, y1: 930.7, y2: 930.7 - v });
  });

  function sparse(id, ys) {
    var p = document.getElementById(id);
    for (var x = 56; x < 1794; x += 126) {
      ys.forEach(function (y) {
        el(p, 'rect', '', { x: x, y: y, width: 1, height: 1 });
      });
    }
  }
  sparse('sparse-top', [133, 225, 318, 410, 503, 595, 688]);
  sparse('sparse-low', [787, 882, 978]);

  function ticks(id, start, end, step, bigEvery, phase) {
    var t = document.getElementById(id), n = 0;
    for (var y = start; y < end; y += step, n++) {
      var big = (n + phase) % bigEvery === 0;
      var yy = Math.round(y) + 0.5;
      el(t, 'path', '', { d: 'M1803 ' + yy + 'H' + (big ? 1811 : 1807) });
    }
  }
  ticks('ticks-top', 180.5 - 18.5 * 3, 695, 18.49, 5, 2);
  ticks('ticks-low', 738.7 - 9.6 * 2, 1026, 9.6, 5, 3);
})();
```
